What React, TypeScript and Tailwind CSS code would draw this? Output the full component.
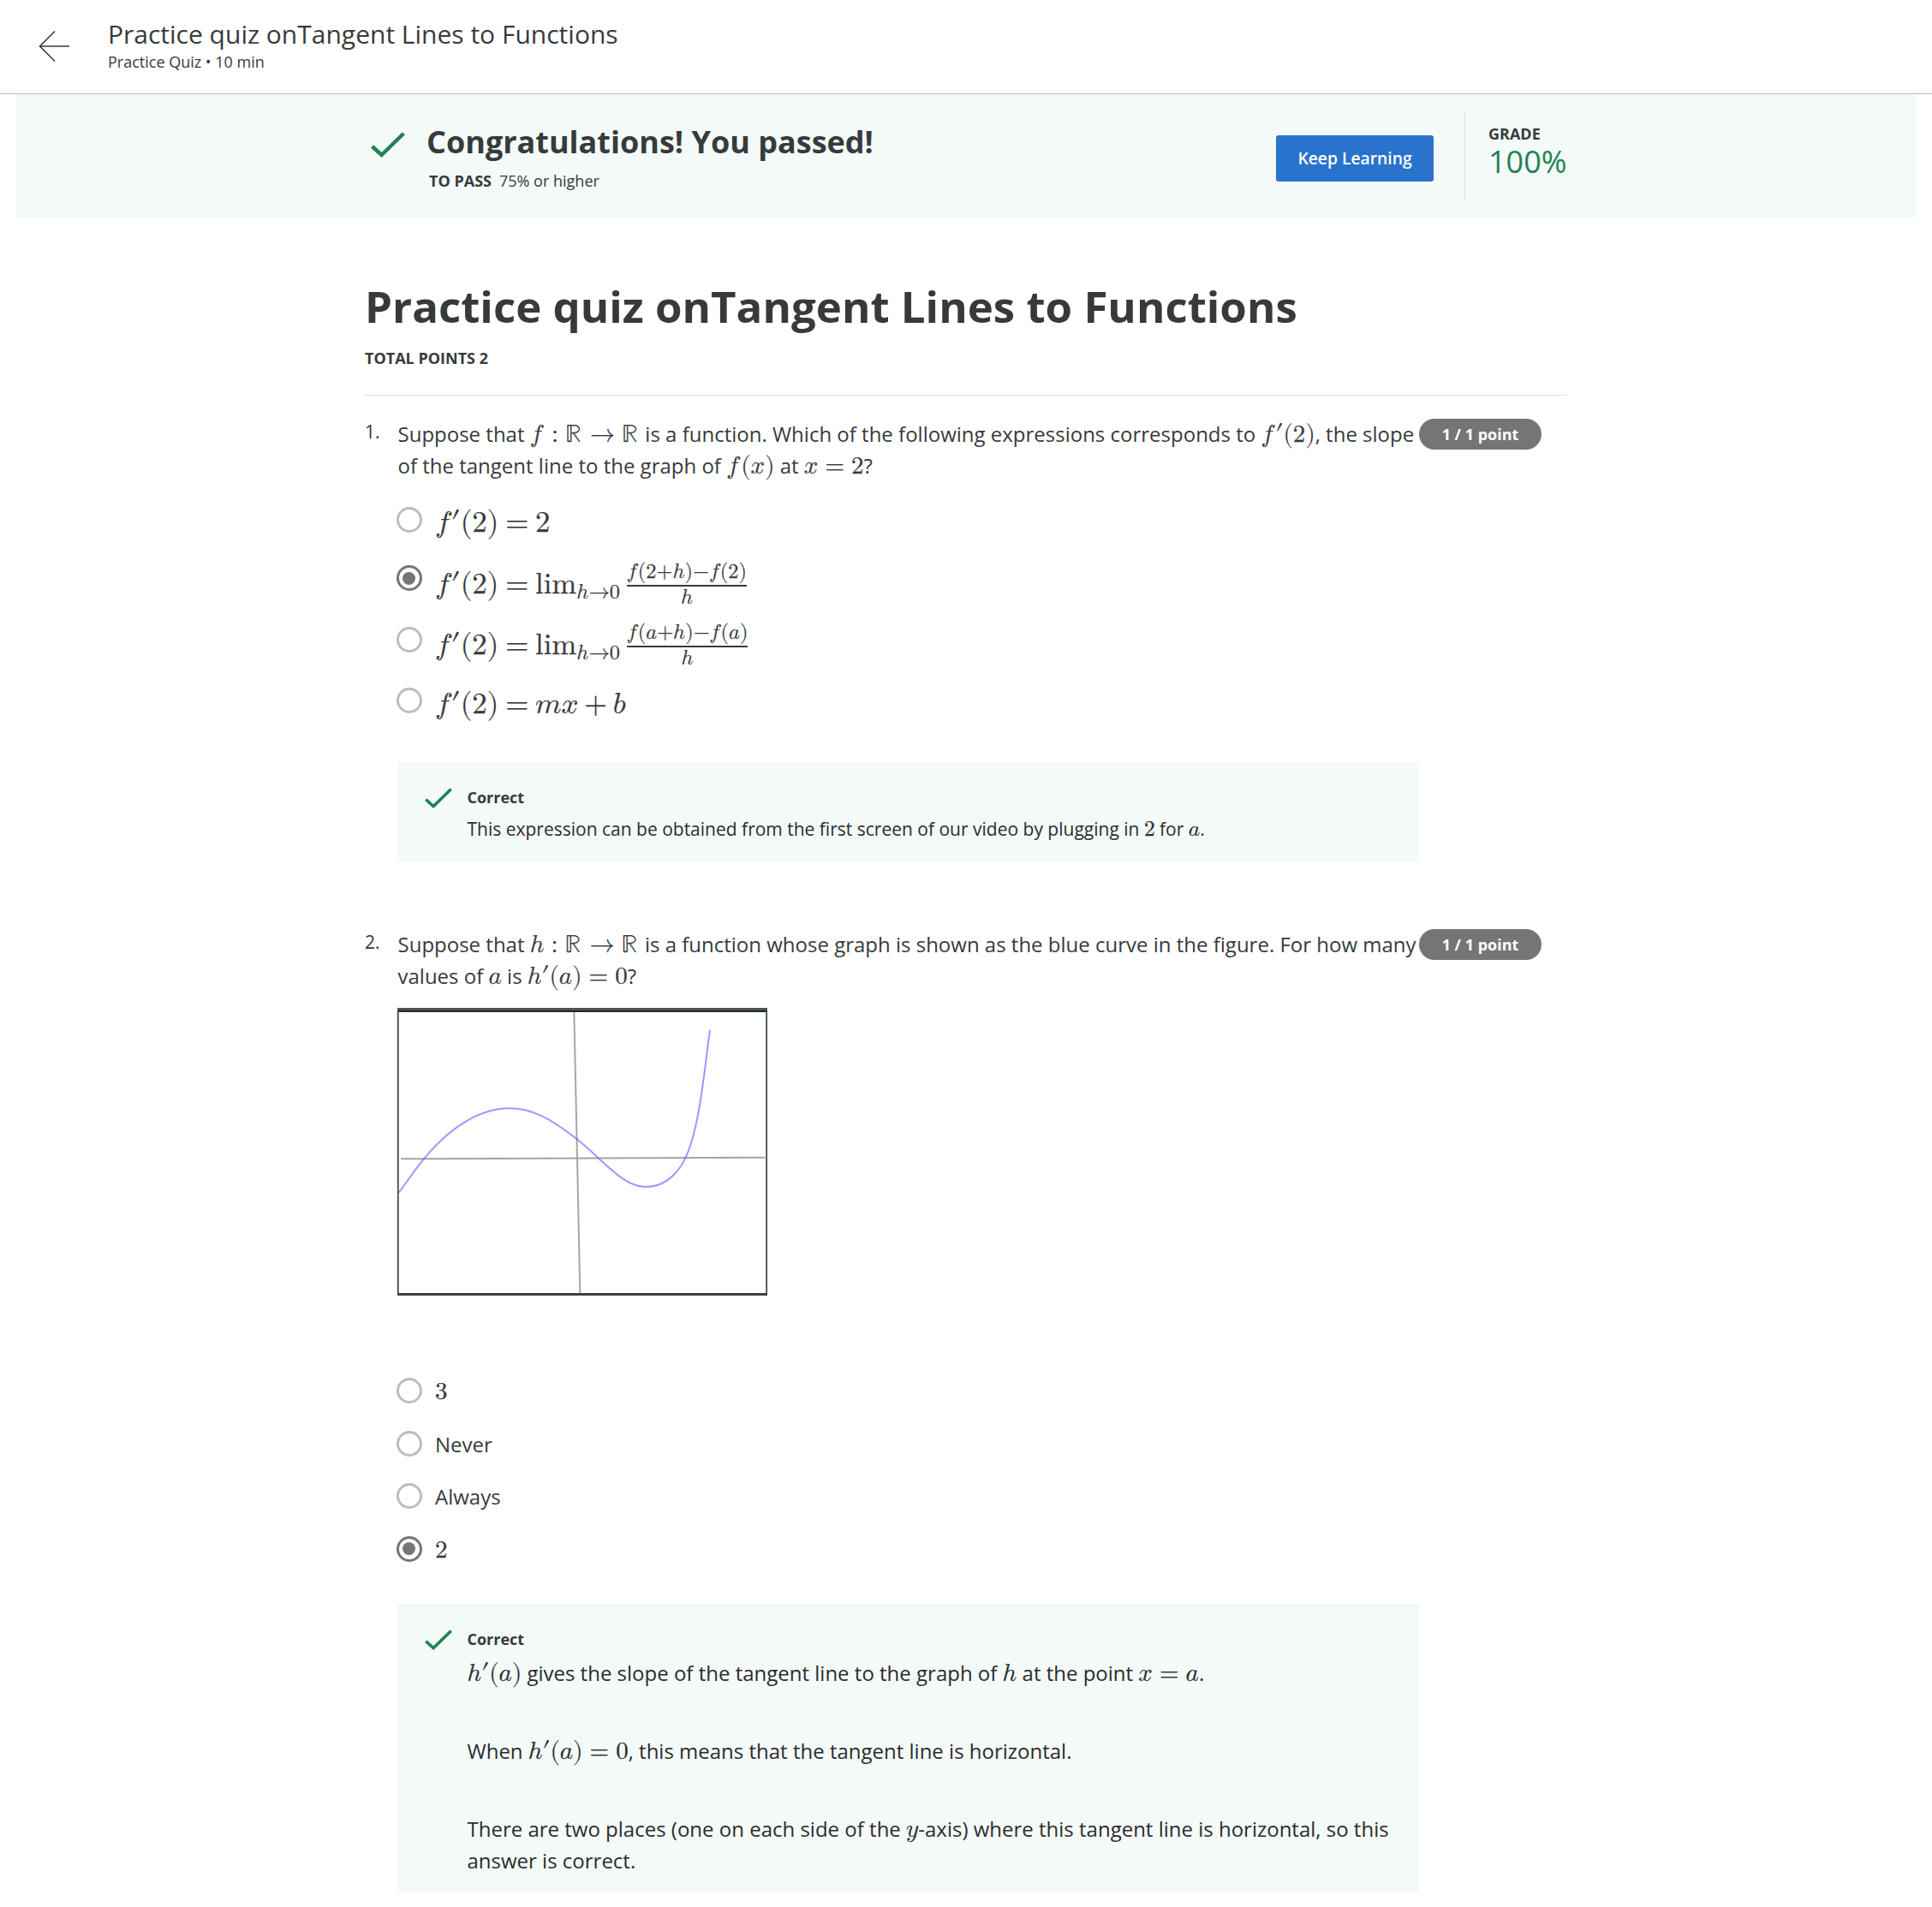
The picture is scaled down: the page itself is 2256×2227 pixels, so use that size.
import type { ReactNode } from "react";

const M = ({ children, className = "text-[29px]" }: { children: ReactNode; className?: string }) => (
  <math className={`font-['Latin_Modern_Math',math,serif] [-webkit-text-stroke:0.25px] ${className}`}>{children}</math>
);

/* f(x), or f'(x) when prime is set */
const Fn = ({ f, arg, prime = false, gap = "0.1em" }: { f: string; arg: ReactNode; prime?: boolean; gap?: string }) => (
  <>
    <mi>{f}</mi>
    {f === "f" && <mspace width={gap} />}
    {prime && <mo lspace="0em" rspace="0em">′</mo>}
    <mo stretchy="false">(</mo>
    {arg}
    <mo stretchy="false">)</mo>
  </>
);

const Reals = ({ f }: { f: string }) => (
  <M>
    <mi>{f}</mi>
    {f === "f" && <mspace width="0.1em" />}
    <mo lspace="0.2778em" rspace="0.2778em">:</mo>
    <mi>ℝ</mi>
    <mspace width="0.08em" />
    <mo stretchy="false">→</mo>
    <mi>ℝ</mi>
    <mspace width="0.09em" />
  </M>
);

const Limit = ({ at }: { at: ReactNode }) => (
  <>
    <msub>
      <mi>lim</mi>
      <mpadded voffset="0.12em">
        <mi>h</mi>
        <mo stretchy="false" lspace="0em" rspace="0em">→</mo>
        <mn>0</mn>
      </mpadded>
    </msub>
    <mspace width="0.17em" />
    <mfrac>
      <mrow>
        <Fn
          f="f"
          gap="0.04em"
          arg={
            <>
              {at}
              <mo lspace="0em" rspace="0em">+</mo>
              <mi>h</mi>
            </>
          }
        />
        <mo lspace="0em" rspace="0em">−</mo>
        <Fn f="f" gap="0.04em" arg={at} />
      </mrow>
      <mi>h</mi>
    </mfrac>
  </>
);

const Check = ({ className }: { className: string }) => (
  <svg viewBox="0 0 40 30" className={className} fill="none" stroke="#1f8354" strokeWidth="4.4">
    <path d="M1.6 17 L12.6 27 L38.4 1.8" />
  </svg>
);

const Radio = ({ on = false, className }: { on?: boolean; className: string }) => (
  <span
    className={`-ml-[1.5px] flex size-[30px] shrink-0 items-center justify-center rounded-full border-[3px] ${
      on ? "border-[#757575]" : "border-[#bdbdbd]"
    } ${className}`}
  >
    {on && <span className="size-[15px] rounded-full bg-[#757575]" />}
  </span>
);

const Badge = () => (
  <span className="mt-px flex h-9 w-[143px] shrink-0 items-center justify-center rounded-full bg-[#757575] text-[18px] font-bold whitespace-nowrap text-white">
    1 / 1 point
  </span>
);

const Question = ({ n, text, children }: { n: string; text: ReactNode; children: ReactNode }) => (
  <section className="flex">
    <span className="-mt-[2px] h-[37px] w-[38px] shrink-0 text-[21px] leading-[37px]">{n}</span>
    <div className="w-[1193px] shrink-0">
      <div className="pl-[0.5px] text-[24px] leading-[37px] whitespace-nowrap">{text}</div>
      {children}
    </div>
    <Badge />
  </section>
);

const Feedback = ({ className, children }: { className: string; children: ReactNode }) => (
  <div className={`flex bg-[#f4faf8] pt-7 pl-8 ${className}`}>
    <Check className="mt-[2px] h-6 w-8" />
    <div className="pl-[17.5px] whitespace-nowrap text-[#2a2c2e]">
      <div className="text-[18px] leading-[27px] font-bold text-[#373a3c]">Correct</div>
      {children}
    </div>
  </div>
);

const fPrime2 = (
  <>
    <Fn f="f" gap="0.05em" arg={<mn>2</mn>} prime />
    <mo lspace="0.23em" rspace="0.22em">=</mo>
  </>
);

const q1Options = [
  { row: "h-[72px]", radio: "mt-[15px]", on: false, rhs: <mn>2</mn> },
  { row: "h-[71px]", radio: "mt-[11px]", on: true, rhs: <Limit at={<mn>2</mn>} /> },
  { row: "h-[69px]", radio: "mt-[12px]", on: false, rhs: <Limit at={<mi>a</mi>} /> },
  {
    row: "h-[69px]",
    radio: "mt-[14px]",
    on: false,
    rhs: (
      <>
        <mi>m</mi>
        <mi>x</mi>
        <mo lspace="0.19em" rspace="0.19em">+</mo>
        <mi>b</mi>
      </>
    ),
  },
];

const q2Options = [
  { label: <M><mn>3</mn></M>, on: false },
  { label: "Never", on: false },
  { label: "Always", on: false },
  { label: <M><mn>2</mn></M>, on: true },
];

const Graph = () => (
  <svg viewBox="72 51 1296 1008" className="h-[336px] w-[432px]" fill="none">
    <rect x="72" y="51" width="1296" height="1008" fill="#fff" />
    <path d="M691 64 L702 578 L712 1050" stroke="#a6a6a6" strokeWidth="6" />
    <path d="M84 580 L1360 575" stroke="#a3a3a3" strokeWidth="6" />
    <path
      d="M77 698 C110 655 135 615 165 580 C255 470 360 403 465 403 C545 403 610 440 700 510 C735 538 750 553 777 578 C850 645 890 678 942 678 C1005 678 1055 635 1082 575 C1130 470 1145 290 1167 128"
      stroke="#5555ff"
      strokeOpacity="0.6"
      strokeWidth="6"
    />
    <rect x="72" y="51" width="1296" height="9" fill="#4c5153" />
    <rect x="72" y="60" width="1296" height="6" fill="#1c2b31" />
    <rect x="72" y="60" width="5" height="999" fill="#3a4143" />
    <rect x="1363" y="60" width="5" height="999" fill="#3a4143" />
    <rect x="72" y="1050" width="1296" height="9" fill="#3a4143" />
  </svg>
);

export default function App() {
  return (
    <div className="h-[2227px] w-full overflow-hidden bg-white font-['Open_Sans',sans-serif] text-[#373a3c]">
      <header className="flex h-[110px] border-b border-[#bdbdbd] pt-[21px] pl-[45px]">
        <svg viewBox="0 0 38 38" className="mt-[14px] size-[38px]" fill="none" stroke="#373a3c" strokeWidth="1.6">
          <path d="M36 19H1.5M19 1.5L1.5 19L19 36.5" />
        </svg>
        <div className="pl-[43px]">
          <div className="text-[30px] leading-[37px]">Practice quiz onTangent Lines to Functions</div>
          <div className="text-[18px] leading-[28px]">Practice Quiz • 10 min</div>
        </div>
      </header>

      <div className="mx-[18px] flex h-36 justify-center bg-[#f4faf8]">
        <div className="flex w-[1404px]">
          <Check className="mt-[44px] ml-[7px] h-[30px] w-10" />
          <div className="grow pt-[31px] pl-[25px]">
            <div className="text-[36px] leading-[49px] font-bold">Congratulations! You passed!</div>
            <div className="mt-2 flex gap-[9px] pl-[3px] text-[18px] leading-[27px]">
              <span className="font-bold">TO PASS</span>
              <span>75% or higher</span>
            </div>
          </div>
          <button className="mt-12 h-[54px] w-[184px] rounded-[3px] bg-[#2a73cc] text-[19.3px] font-semibold text-white">
            Keep Learning
          </button>
          <div className="mt-[21px] ml-9 h-[102px] w-[120px] border-l border-[#dedede] pt-4 pl-[27px]">
            <div className="text-[18px] leading-[18px] font-bold">GRADE</div>
            <div className="text-[36px] leading-[48px] text-[#1f8354]">100%</div>
          </div>
        </div>
      </div>

      <main className="mx-auto w-[1404px]">
        <h1 className="mt-[68px] text-[51px] leading-[70px] font-bold">Practice quiz onTangent Lines to Functions</h1>
        <div className="mt-[13px] h-[57px] border-b border-[#e1e1e1] text-[18px] leading-[27px] font-bold">
          TOTAL POINTS 2
        </div>

        <div className="mt-[26px]">
          <Question
            n="1."
            text={
              <>
                Suppose that <Reals f="f" /> is a function. Which of the following expressions corresponds to{" "}
                <M><Fn f="f" arg={<mn>2</mn>} prime /></M>, the slope
                <br />
                of the tangent line to the graph of <M><Fn f="f" arg={<mi>x</mi>} /></M> at{" "}
                <M><mi>x</mi><mo>=</mo><mn>2</mn></M>?
              </>
            }
          >
            <div className="mt-[15px]">
              {q1Options.map((o, i) => (
                <div key={i} className={`flex ${o.row}`}>
                  <Radio on={o.on} className={o.radio} />
                  <div className="pl-[15.5px] text-[24px] leading-[69px] whitespace-nowrap">
                    <M className="text-[34.85px]">
                      {fPrime2}
                      {o.rhs}
                    </M>
                  </div>
                </div>
              ))}
            </div>
            <Feedback className="mt-8 h-[116px]">
              <div className="mt-[5px] text-[21px] leading-[37px]">
                This expression can be obtained from the first screen of our video by plugging in{" "}
                <M className="text-[25.4px]"><mn>2</mn></M> for <M className="text-[25.4px]"><mi>a</mi></M>.
              </div>
            </Feedback>
          </Question>
        </div>

        <div className="mt-[78px]">
          <Question
            n="2."
            text={
              <>
                Suppose that <Reals f="h" /> is a function whose graph is shown as the blue curve in the figure. For how many
                <br />
                values of <M><mi>a</mi></M> is <M><Fn f="h" arg={<mi>a</mi>} prime /><mo>=</mo><mn>0</mn></M>?
              </>
            }
          >
            <div className="mt-[19px] h-[429px]">
              <Graph />
            </div>
            {q2Options.map((o, i) => (
              <div key={i} className="flex h-[61.5px]">
                <Radio on={o.on} className="mt-[3px]" />
                <div className="pl-[15.5px] text-[24px] leading-[37px]">{o.label}</div>
              </div>
            ))}
            <Feedback className="mt-[21px] h-[338px]">
              <div className="mt-[7px] flex flex-col gap-[54px] text-[24px] leading-[37px]">
                <p>
                  <M><Fn f="h" arg={<mi>a</mi>} prime /></M> gives the slope of the tangent line to the graph of{" "}
                  <M><mi>h</mi></M> at the point <M><mi>x</mi><mo>=</mo><mi>a</mi></M>.
                </p>
                <p>
                  When <M><Fn f="h" arg={<mi>a</mi>} prime /><mo>=</mo><mn>0</mn></M>, this means that the tangent line is
                  horizontal.
                </p>
                <p>
                  There are two places (one on each side of the <M><mi>y</mi></M>-axis) where this tangent line is
                  horizontal, so this
                  <br />
                  answer is correct.
                </p>
              </div>
            </Feedback>
          </Question>
        </div>
      </main>
    </div>
  );
}
